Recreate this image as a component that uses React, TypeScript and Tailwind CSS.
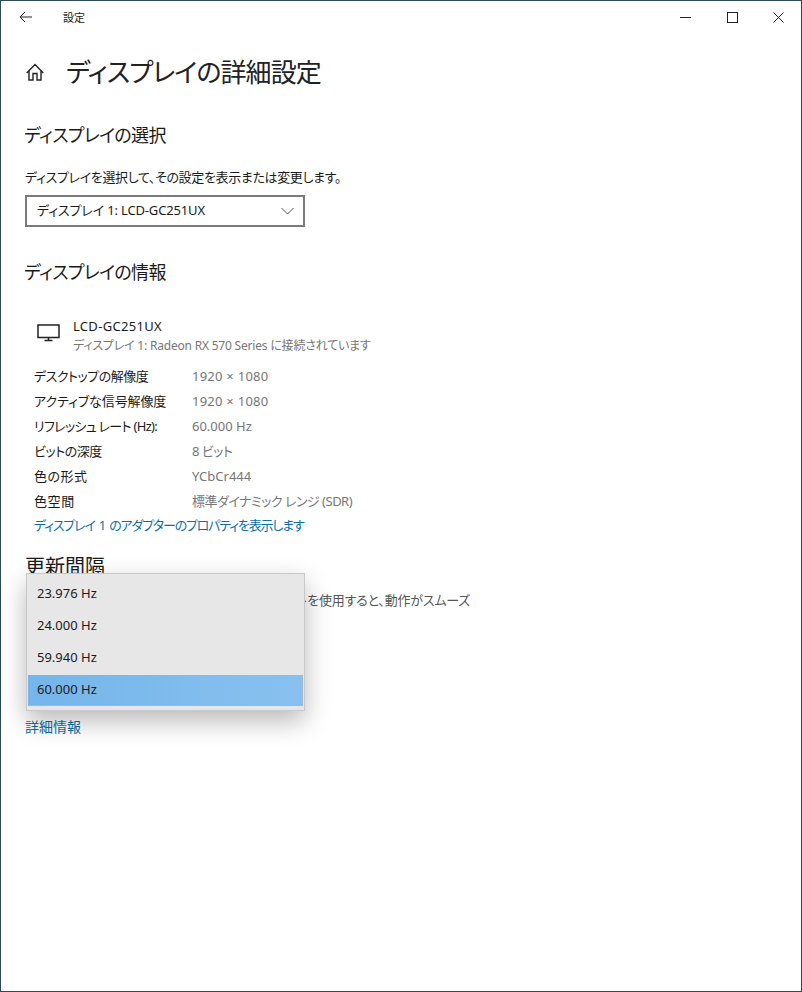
const font = "font-['Noto_Sans','Noto_Sans_CJK_JP',sans-serif] [font-feature-settings:'palt']";

const rows = [
  { label: 'デスクトップの解像度', value: '1920 × 1080', labelClass: 'tracking-[-0.5px]', valueClass: 'tracking-[0.25px]' },
  { label: 'アクティブな信号解像度', value: '1920 × 1080', labelClass: 'tracking-[-0.1px]', valueClass: 'tracking-[0.25px]' },
  { label: 'リフレッシュ レート (Hz):', value: '60.000 Hz', labelClass: 'tracking-[-0.7px]', valueClass: '' },
  { label: 'ビットの深度', value: '8 ビット', labelClass: 'tracking-[-0.5px]', valueClass: 'tracking-[-0.5px]' },
  { label: '色の形式', value: 'YCbCr444', labelClass: 'tracking-[0.5px]', valueClass: '' },
  { label: '色空間', value: '標準ダイナミック レンジ (SDR)', labelClass: 'tracking-[0.6px]', valueClass: 'tracking-[-0.5px]' },
];

const rates = ['23.976 Hz', '24.000 Hz', '59.940 Hz'];

export default function App() {
  return (
    <div className={`${font} w-[802px] h-[992px] bg-white border border-[#2b4b5c] text-[#1a1a1a] overflow-hidden`}>
      {/* title bar */}
      <div className="flex items-center h-[32px]">
        <svg className="ml-[18px]" width="14" height="12" viewBox="0 0 14 12" fill="none" stroke="#222" strokeWidth="1">
          <path d="M13 6H1M6 1 1 6l5 5" />
        </svg>
        <span className="ml-[30px] text-[11px] leading-none">設定</span>
        <div className="ml-auto flex items-center">
          <svg className="mr-[36px]" width="11" height="11" viewBox="0 0 11 11" stroke="#222" fill="none"><path d="M0 5.5h11" /></svg>
          <svg className="mr-[35px]" width="11" height="11" viewBox="0 0 11 11" stroke="#222" fill="none"><rect x=".5" y=".5" width="10" height="10" /></svg>
          <svg className="mr-[17px]" width="11" height="11" viewBox="0 0 11 11" stroke="#222" fill="none"><path d="M.5.5l10 10M10.5.5l-10 10" /></svg>
        </div>
      </div>

      <div className="pl-[23px]">
        <div className="flex items-center mt-[21px] h-[36px]">
          <svg className="ml-[2px]" width="18" height="18" viewBox="0 0 18 18" fill="none" stroke="#222" strokeWidth="1.4">
            <path d="M.7 10 9 1.5 17.3 10M3 8v9h4v-6.500h4V17h4V8" />
          </svg>
          <h1 className="ml-[22px] text-[26px] leading-[36px] font-normal text-[#222] tracking-[-0.9px]">ディスプレイの詳細設定</h1>
        </div>

        <h2 className="mt-[32px] text-[18px] leading-[26px] font-normal tracking-[-0.6px]">ディスプレイの選択</h2>
        <p className="mt-[19px] ml-[1px] text-[13px] leading-[20px] tracking-[-0.35px]">ディスプレイを選択して、その設定を表示または変更します。</p>
        <div className="mt-[8px] ml-[1px] w-[280px] h-[32px] border-2 border-[#7a7a7a] flex items-center justify-between pl-[10px] pr-[9px] text-[13px]">
          <span className="tracking-[-0.15px]">ディスプレイ 1: LCD-GC251UX</span>
          <svg width="13" height="8" viewBox="0 0 13 8" fill="none" stroke="#555"><path d="M.5 1l6 6 6-6" /></svg>
        </div>

        <h2 className="mt-[32px] text-[18px] leading-[26px] font-normal tracking-[-0.6px]">ディスプレイの情報</h2>

        <div className="flex mt-[32px] ml-[13px]">
          <svg className="mt-[7px]" width="24" height="18" viewBox="0 0 24 18" fill="none" stroke="#222" strokeWidth="1.5">
            <path d="M1 1h21v12.500H1zM11.500 13.500v3M7.500 16.500h8" />
          </svg>
          <div className="ml-[12px]">
            <div className="text-[13px] leading-[19px] tracking-[0.3px]">LCD-GC251UX</div>
            <div className="text-[12px] leading-[19px] text-[#767676] tracking-[-0.2px]">ディスプレイ 1: Radeon RX 570 Series に接続されています</div>
          </div>
        </div>

        <div className="mt-[9px] ml-[10px]">
          {rows.map((row) => (
            <div key={row.label} className="flex h-[25px] items-center text-[13px]">
              <span className={`w-[158px] ${row.labelClass}`}>{row.label}</span>
              <span className={`text-[#767676] ${row.valueClass}`}>{row.value}</span>
            </div>
          ))}
        </div>
        <a className="block ml-[10px] text-[13px] leading-[23px] text-[#0b6fab] tracking-[-1.2px] [word-spacing:2px]">ディスプレイ 1 のアダプターのプロパティを表示します</a>

        <div className="relative mt-[17px]">
          <h2 className="ml-[1px] text-[20px] leading-[26px] font-normal">更新間隔</h2>
          <p className="mt-[10px] ml-[1px] text-[13px] leading-[20px] text-[#555]">
            <span className="tracking-[0.25px]">リフレッシュ レートを選択してください。高いレート</span>
            <span className="tracking-[-0.2px]">を使用すると、動作がスムーズ</span>
          </p>

          {/* open dropdown */}
          <div className="absolute left-[2px] top-[19px] w-[279px] h-[138px] bg-[#e7e7e7] border border-[#c8c8c8] pt-[4px] px-[1px] text-[13px] shadow-[0_10px_24px_rgba(0,0,0,0.28)]">
            {rates.map((rate) => (
              <div key={rate} className="h-[32px] flex items-center pl-[9px]">{rate}</div>
            ))}
            <div className="h-[31px] mt-[1px] flex items-center pl-[9px] bg-gradient-to-r from-[#75b5ea] to-[#88c1ef] border-r border-b border-[#9db8d2]">60.000 Hz</div>
            <div className="h-[4px] bg-[#e3e8ee]" />
          </div>

          <a className="block mt-[107px] ml-[1px] text-[14px] leading-[20px] text-[#0b6fab]">詳細情報</a>
        </div>
      </div>
    </div>
  );
}
